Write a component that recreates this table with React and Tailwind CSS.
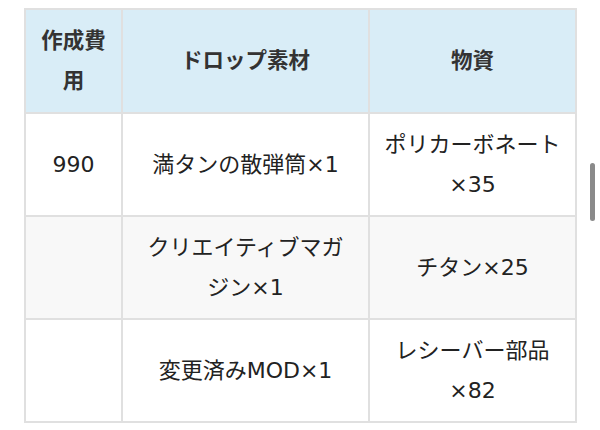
const ROWS = [
  { cost: "990", drop: "満タンの散弾筒×1", material: "ポリカーボネート×35" },
  { cost: "", drop: "クリエイティブマガジン×1", material: "チタン×25" },
  { cost: "", drop: "変更済みMOD×1", material: "レシーバー部品×82" },
];

export default function App() {
  return (
    <div
      className="relative w-[600px] h-[430px] bg-white overflow-hidden"
      style={{ fontFamily: '"DejaVu Sans", "Noto Sans CJK JP", sans-serif' }}
    >
      <div className="pt-[8px] pl-[24px]">
        <table className="table-fixed border-collapse w-[551px] text-[22px] leading-[39.5px] text-[#222]">
          <colgroup>
            <col className="w-[97px]" />
            <col className="w-[247px]" />
            <col className="w-[207px]" />
          </colgroup>
          <thead>
            <tr className="bg-[#d9edf7]">
              <th className="border-2 border-[#e0e0e0] px-[10px] py-[11px] font-bold text-[21.5px] leading-[40px] text-[#333] text-center">
                作成費用
              </th>
              <th className="border-2 border-[#e0e0e0] px-[14px] py-[11px] font-bold text-[21.5px] leading-[40px] text-[#333] text-center">
                ドロップ素材
              </th>
              <th className="border-2 border-[#e0e0e0] px-[12px] py-[11px] font-bold text-[21.5px] leading-[40px] text-[#333] text-center">
                物資
              </th>
            </tr>
          </thead>
          <tbody>
            {ROWS.map((row, i) => (
              <tr key={i} className={i === 1 ? "bg-[#f8f8f8]" : "bg-white"}>
                <td className="border-2 border-[#e0e0e0] px-[12px] py-[11px] text-center">{row.cost}</td>
                <td className="border-2 border-[#e0e0e0] px-[14px] py-[11px] text-center">{row.drop}</td>
                <td className="border-2 border-[#e0e0e0] px-[12px] py-[11px] text-center">{row.material}</td>
              </tr>
            ))}
          </tbody>
        </table>
      </div>
      <div className="absolute left-[590px] top-[163px] w-[5px] h-[58px] rounded-full bg-[#8a8a8a]" />
    </div>
  );
}
